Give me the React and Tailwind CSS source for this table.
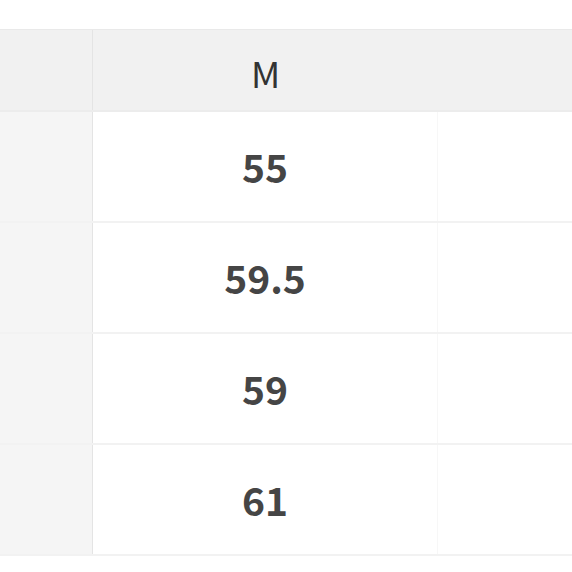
import React from 'react';

const rows = ['55', '59.5', '59', '61'];

export default function App() {
  return (
    <div
      className="w-[572px] h-[572px] overflow-hidden bg-white pt-[29px]"
      style={{ fontFamily: '"Noto Sans CJK KR", "Noto Sans", sans-serif' }}
    >
      {/* Header */}
      <div className="grid grid-cols-[92px_1px_345px_1fr] h-[83px] border-t border-[#e9e9e9] border-b-2 border-b-[#ececec] bg-[#f1f1f1]">
        <div />
        <div className="bg-[#e4e4e4]" />
        <div className="flex items-center justify-center text-[36px] text-[#333] pt-[4px]">M</div>
        <div />
      </div>

      {/* Body */}
      {rows.map((v) => (
        <div
          key={v}
          className="grid grid-cols-[92px_1px_345px_1fr] h-[111px] border-b-2 border-[#f2f2f2]"
        >
          <div className="bg-[#f5f5f5]" />
          <div className="bg-[#e4e4e4]" />
          <div className="flex items-center justify-center text-[39px] font-bold text-[#454545] border-r border-[#f7f7f7]">
            {v}
          </div>
          <div />
        </div>
      ))}
    </div>
  );
}
